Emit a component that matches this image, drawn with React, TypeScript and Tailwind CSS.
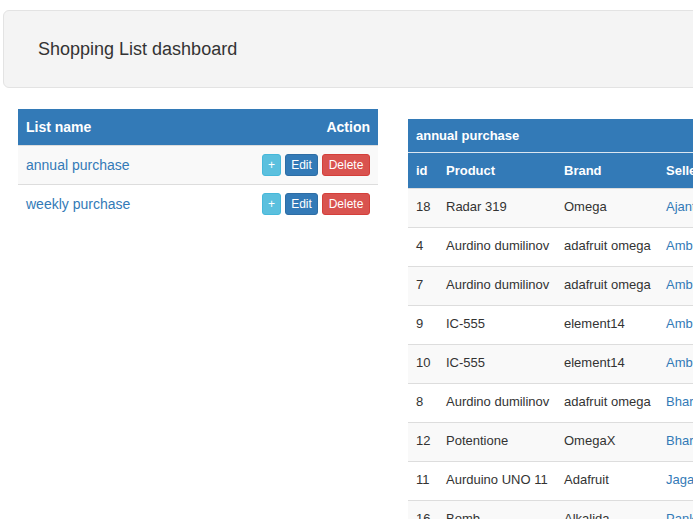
// Shopping list dashboard — Bootstrap-3 look: jumbotron header, list table, purchase table.
const lists = ["annual purchase", "weekly purchase"];

const items = [
  { id: 18, product: "Radar 319", brand: "Omega", seller: "Ajanta Electronics" },
  { id: 4, product: "Aurdino dumilinov", brand: "adafruit omega", seller: "Ambuja Traders" },
  { id: 7, product: "Aurdino dumilinov", brand: "adafruit omega", seller: "Ambuja Traders" },
  { id: 9, product: "IC-555", brand: "element14", seller: "Ambuja Traders" },
  { id: 10, product: "IC-555", brand: "element14", seller: "Ambuja Traders" },
  { id: 8, product: "Aurdino dumilinov", brand: "adafruit omega", seller: "Bharat Electronics" },
  { id: 12, product: "Potentione", brand: "OmegaX", seller: "Bharat Electronics" },
  { id: 11, product: "Aurduino UNO 11", brand: "Adafruit", seller: "Jagannath Stores" },
  { id: 16, product: "Bomb", brand: "Alkalida", seller: "Pankaj Electricals" },
];

function ListTable() {
  return (
    <div className="w-[360px] shrink-0">
      <div className="flex h-[36px] items-center justify-between bg-[#337ab7] px-2 text-[14px] font-bold text-white">
        <span>List name</span>
        <span>Action</span>
      </div>
      {lists.map((name, i) => (
        <div
          key={name}
          className={`flex h-[39px] items-center justify-between border-t border-[#dddddd] px-2 ${i % 2 === 0 ? "bg-[#f9f9f9]" : "bg-white"}`}
        >
          <a className="text-[14px] text-[#337ab7]">{name}</a>
          <div className="flex items-center gap-[4px] text-[12px] leading-[18px] text-white">
            <button className="h-[22px] w-[19px] rounded-[3px] border border-[#46b8da] bg-[#5bc0de]">+</button>
            <button className="h-[22px] w-[33px] rounded-[3px] border border-[#2e6da4] bg-[#337ab7]">Edit</button>
            <button className="h-[22px] w-[48px] rounded-[3px] border border-[#d43f3a] bg-[#d9534f]">Delete</button>
          </div>
        </div>
      ))}
    </div>
  );
}

function PurchaseTable() {
  return (
    <div className="mt-[10px] w-[420px] shrink-0 text-[13px] text-[#333333]">
      <div className="flex h-[33px] items-center bg-[#337ab7] px-2 font-bold text-white">annual purchase</div>
      <div className="h-px bg-[#dbe6f1]" />
      <div className="grid h-[35px] grid-cols-[30px_118px_102px_170px] items-center bg-[#337ab7] font-bold text-white">
        <span className="px-2">id</span>
        <span className="px-2">Product</span>
        <span className="px-2">Brand</span>
        <span className="px-2">Seller</span>
      </div>
      {items.map((it, i) => (
        <div
          key={i}
          className={`grid h-[39px] grid-cols-[30px_118px_102px_170px] items-center border-t border-[#dddddd] pb-[3px] ${i % 2 === 0 ? "bg-[#f9f9f9]" : "bg-white"}`}
        >
          <span className="px-2">{it.id}</span>
          <span className="whitespace-nowrap px-2">{it.product}</span>
          <span className="whitespace-nowrap px-2">{it.brand}</span>
          <a className="whitespace-nowrap px-2 text-[#337ab7]">{it.seller}</a>
        </div>
      ))}
    </div>
  );
}

export default function App() {
  return (
    <div className="h-[519px] w-[693px] overflow-hidden bg-white font-['Liberation_Sans',Arial,sans-serif]">
      <div className="ml-[3px] mr-[-20px] mt-[10px] flex h-[78px] items-center rounded-[6px] border border-[#e3e3e3] bg-[#f4f4f4] pl-[34px]">
        <h1 className="text-[18px] text-[#333333]">Shopping List dashboard</h1>
      </div>
      <div className="mt-[21px] flex gap-[30px] pl-[18px]">
        <ListTable />
        <PurchaseTable />
      </div>
    </div>
  );
}
